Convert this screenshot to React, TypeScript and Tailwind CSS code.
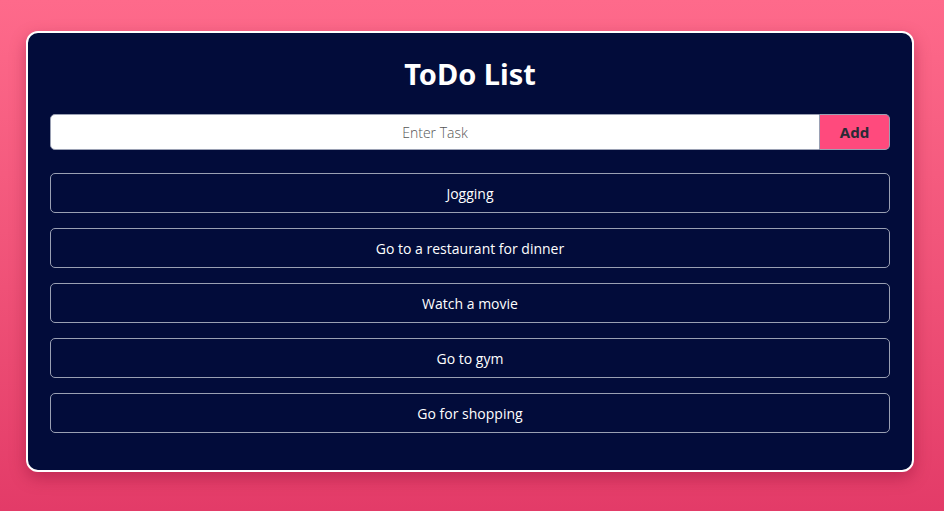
const tasks = ["Jogging", "Go to a restaurant for dinner", "Watch a movie", "Go to gym", "Go for shopping"]

const App = () => {
  return (
    <div className="min-h-[511px] w-full bg-gradient-to-b from-[#fe6a8b] to-[#e33b68] pl-[26px] pr-[30px] pt-[31px] font-['Open_Sans',sans-serif]">
      <div className="w-full rounded-[12px] border-2 border-white bg-[#020c3a] px-[22px] pt-[20px] pb-[37px] shadow-[0_6px_16px_rgba(120,0,40,0.35)]">
        <h1 className="text-center text-[29px] leading-[42px] font-bold text-white font-['Noto_Sans',sans-serif]">ToDo List</h1>
        <div className="mt-[19px] flex h-[36px]">
          <input
            className="flex-1 rounded-l-[5px] border border-[#9aa0b3] bg-white text-center text-[14px] font-light text-[#333] placeholder:text-[#555] outline-none"
            placeholder="Enter Task"
          />
          <button className="w-[70px] rounded-r-[5px] border border-l-0 border-[#9aa0b3] bg-[#ff4a7d] text-[15px] font-bold text-[#2a2a35] font-['Noto_Sans',sans-serif]">
            Add
          </button>
        </div>
        <ul className="mt-[23px] flex flex-col gap-[15px]">
          {tasks.map((t) => (
            <li
              key={t}
              className="flex h-[40px] items-center justify-center rounded-[5px] border border-[#9aa0b3] text-[14px] font-normal text-white"
            >
              {t}
            </li>
          ))}
        </ul>
      </div>
    </div>
  )
}

export default App
